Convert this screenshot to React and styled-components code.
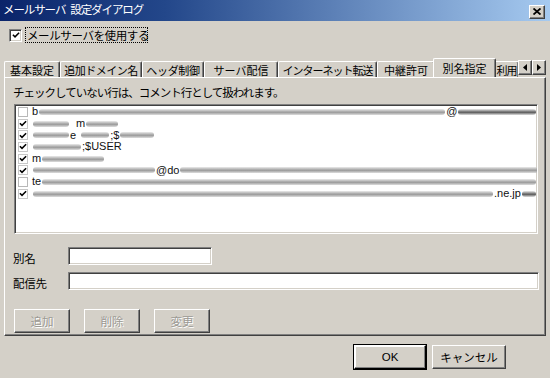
import React from "react";
import styled, { createGlobalStyle, css } from "styled-components";

const Global = createGlobalStyle`
  html, body { margin: 0; padding: 0; background: #d4d0c8; }
  body { font-family: "Liberation Sans", "Noto Sans CJK JP", sans-serif; }
  * { box-sizing: border-box; }
`;

const FONT = `"Liberation Sans", "Noto Sans CJK JP", sans-serif`;

const sunken = css`
  border-top: 1px solid #808080;
  border-left: 1px solid #808080;
  border-bottom: 1px solid #ffffff;
  border-right: 1px solid #ffffff;
  box-shadow: inset 1px 1px 0 #404040, inset -1px -1px 0 #d4d0c8;
`;

const raised = css`
  border-top: 1px solid #ffffff;
  border-left: 1px solid #ffffff;
  border-bottom: 1px solid #404040;
  border-right: 1px solid #404040;
  box-shadow: inset -1px -1px 0 #808080;
`;

const Window = styled.div`
  width: 550px;
  height: 378px;
  background: #d4d0c8;
  font-family: ${FONT};
  font-size: 11px;
  color: #000;
  display: flex;
  flex-direction: column;
  overflow: hidden;
`;

const TitleBar = styled.div`
  height: 21px;
  background: linear-gradient(to right, #0a246a 0%, #23478a 30%, #a6caf0 100%);
  display: flex;
  align-items: center;
  justify-content: space-between;
  padding: 0 5px 0 3px;
`;

const Title = styled.div`
  color: #fff;
  font-size: 11.5px;
  letter-spacing: -1.1px;
  line-height: 1;
  white-space: nowrap;
  display: flex;
  gap: 5px;
`;

const CloseButton = styled.div`
  width: 16px;
  height: 14px;
  background: #d4d0c8;
  ${raised};
  display: flex;
  align-items: center;
  justify-content: center;
  margin-top: 2px;
`;

const Body = styled.div`
  flex: 1;
  display: flex;
  flex-direction: column;
  padding: 0 4px;
`;

const UseRow = styled.div`
  display: flex;
  align-items: center;
  height: 16px;
  margin-top: 6px;
  padding-left: 5px;
`;

const BigCheck = styled.div`
  width: 13px;
  height: 13px;
  background: #fff;
  ${sunken};
  display: flex;
  align-items: center;
  justify-content: center;
`;

const FocusLabel = styled.div`
  margin-left: 3px;
  height: 16px;
  width: 123px;
  border: 1px dotted #000;
  display: flex;
  align-items: center;
  padding-left: 1px;
  font-size: 11.5px;
  letter-spacing: -0.4px;
  white-space: nowrap;
`;

const TabStrip = styled.div`
  margin-top: 15px;
  height: 19px;
  display: flex;
  align-items: flex-end;
`;

const TabTrack = styled.div`
  flex: 1;
  display: flex;
  align-items: flex-end;
  overflow: hidden;
  height: 19px;
`;

const Tab = styled.div`
  flex: none;
  width: ${(p) => p.$w}px;
  height: ${(p) => (p.$active ? 20 : 16)}px;
  margin: ${(p) => (p.$active ? "0 -2px -1px -2px" : "0")};
  position: relative;
  z-index: ${(p) => (p.$active ? 2 : 1)};
  background: #d4d0c8;
  border-top: 1px solid #fff;
  border-left: 1px solid #fff;
  border-right: 1px solid #404040;
  box-shadow: inset -1px 0 0 #808080;
  border-radius: 2px 2px 0 0;
  display: flex;
  align-items: center;
  justify-content: center;
  font-size: 11px;
  letter-spacing: ${(p) => p.$ls}px;
  white-space: nowrap;
  padding-bottom: ${(p) => (p.$active ? 2 : 0)}px;
`;

const Arrows = styled.div`
  display: flex;
  align-self: flex-start;
  margin-top: 2px;
`;

const ArrowButton = styled.div`
  width: 14px;
  height: 15px;
  background: #d4d0c8;
  ${raised};
  display: flex;
  align-items: center;
  justify-content: center;
`;

const Panel = styled.div`
  height: 259px;
  width: 542px;
  border-top: 1px solid #fff;
  border-left: 1px solid #fff;
  border-right: 1px solid #404040;
  border-bottom: 1px solid #404040;
  box-shadow: inset -1px -1px 0 #808080;
  padding: 8px 0 0 8px;
  display: flex;
  flex-direction: column;
`;

const Hint = styled.div`
  font-size: 11.5px;
  letter-spacing: -1px;
  line-height: 14px;
  white-space: nowrap;
`;

const ListBox = styled.div`
  margin: 4px 0 0 1px;
  width: 524px;
  height: 130px;
  background: #fff;
  ${sunken};
  padding: 1px 0 0 3px;
  overflow: hidden;
`;

const Row = styled.div`
  height: 11.7px;
  display: flex;
  align-items: center;
  font-size: 11px;
  line-height: 1;
  white-space: nowrap;
`;

const SmallBox = styled.div`
  flex: none;
  width: 10px;
  height: 10px;
  border: 1px solid ${(p) => (p.$checked ? "#c8c8c8" : "#b8b8b8")};
  background: #fff;
  margin-right: 4px;
  display: flex;
  align-items: center;
  justify-content: center;
`;

const Frag = styled.span`
  flex: none;
  color: #111;
`;

const Smear = styled.span`
  flex: none;
  width: ${(p) => p.$w}px;
  height: 6px;
  margin: 0 1px;
  border-radius: 4px;
  background: linear-gradient(
    to bottom,
    rgba(215, 215, 215, 0.5),
    ${(p) => (p.$dark ? "#5a5a5a" : "#9a9a9a")} 55%,
    rgba(200, 200, 200, 0.6)
  );
  filter: blur(0.7px);
`;

const Gap = styled.span`
  flex: none;
  width: ${(p) => p.$w}px;
`;

const Form = styled.div`
  margin-top: 12px;
  display: grid;
  grid-template-columns: 55px auto;
  row-gap: 5px;
  align-items: center;
`;

const FieldLabel = styled.div`
  font-size: 11.5px;
  letter-spacing: -0.3px;
  padding-top: 4px;
`;

const TextBox = styled.div`
  width: ${(p) => p.$w}px;
  height: 18px;
  background: #fff;
  ${sunken};
`;

const ActionRow = styled.div`
  margin-top: 18px;
  display: flex;
  gap: 14px;
  padding-left: 1px;
`;

const PushButton = styled.div`
  width: ${(p) => p.$w || 56}px;
  height: 24px;
  background: #d4d0c8;
  ${raised};
  display: flex;
  align-items: center;
  justify-content: center;
  font-size: 11.5px;
  color: ${(p) => (p.$disabled ? "#9c9a94" : "#000")};
  text-shadow: ${(p) => (p.$disabled ? "1px 1px 0 #ffffff" : "none")};
  ${(p) =>
    p.$default &&
    css`
      outline: 1px solid #000;
      outline-offset: 0;
      border-bottom-color: #000;
      border-right-color: #000;
      box-shadow: inset -1px -1px 0 #808080, inset 1px 1px 0 #fff;
    `}
`;

const Footer = styled.div`
  display: flex;
  justify-content: flex-end;
  gap: 6px;
  padding: 9px 40px 0 0;
`;

const Check = ({ size = 9 }) => (
  <svg width={size} height={size} viewBox="0 0 9 9">
    <path d="M1 4.2 L3.4 6.6 L8 2" fill="none" stroke="#000" strokeWidth="1.7" />
  </svg>
);

const tabs = [
  { label: "基本設定", w: 56, ls: 0 },
  { label: "追加ドメイン名", w: 82, ls: -0.5 },
  { label: "ヘッダ制御", w: 62, ls: -0.3 },
  { label: "サーバ配信", w: 74, ls: 0 },
  { label: "インターネット転送", w: 99, ls: -1 },
  { label: "中継許可", w: 58, ls: 0 },
  { label: "別名指定", w: 63, ls: 0, active: true },
  { label: "利用", w: 25, ls: -1 },
];

const rows = [
  { checked: false, parts: [["t", "b"], ["s", 406], ["t", "@"], ["s", 78, true]] },
  { checked: true, parts: [["s", 36], ["g", 6], ["t", "m"], ["s", 32]] },
  { checked: true, parts: [["s", 36], ["t", "e"], ["g", 4], ["s", 28], ["t", ";$"], ["s", 34]] },
  { checked: true, parts: [["s", 48], ["t", ";$USER"]] },
  { checked: true, parts: [["t", "m"], ["s", 62]] },
  { checked: true, parts: [["s", 122], ["t", "@do"], ["s", 362]] },
  { checked: false, parts: [["t", "te"], ["s", 494]] },
  { checked: true, parts: [["s", 460], ["t", ".ne.jp"], ["s", 14, true]] },
];

export default function App() {
  return (
    <Window>
      <Global />
      <TitleBar>
        <Title>
          <span>メールサーバ</span>
          <span>設定ダイアログ</span>
        </Title>
        <CloseButton>
          <svg width="8" height="7" viewBox="0 0 8 7">
            <path d="M0.5 0.5 L7.5 6.5 M7.5 0.5 L0.5 6.5" stroke="#000" strokeWidth="1.8" />
          </svg>
        </CloseButton>
      </TitleBar>
      <Body>
        <UseRow>
          <BigCheck>
            <Check size={8} />
          </BigCheck>
          <FocusLabel>メールサーバを使用する</FocusLabel>
        </UseRow>
        <TabStrip>
          <TabTrack>
            {tabs.map((t) => (
              <Tab key={t.label} $w={t.w} $ls={t.ls} $active={t.active}>
                {t.label}
              </Tab>
            ))}
          </TabTrack>
          <Arrows>
            <ArrowButton>
              <svg width="4" height="7" viewBox="0 0 4 7">
                <path d="M4 0 L0 3.5 L4 7 Z" fill="#000" />
              </svg>
            </ArrowButton>
            <ArrowButton>
              <svg width="4" height="7" viewBox="0 0 4 7">
                <path d="M0 0 L4 3.5 L0 7 Z" fill="#000" />
              </svg>
            </ArrowButton>
          </Arrows>
        </TabStrip>
        <Panel>
          <Hint>チェックしていない行は、コメント行として扱われます。</Hint>
          <ListBox>
            {rows.map((r, i) => (
              <Row key={i}>
                <SmallBox $checked={r.checked}>{r.checked && <Check />}</SmallBox>
                {r.parts.map(([k, v, d], j) =>
                  k === "t" ? (
                    <Frag key={j}>{v}</Frag>
                  ) : k === "g" ? (
                    <Gap key={j} $w={v} />
                  ) : (
                    <Smear key={j} $w={v} $dark={d} />
                  )
                )}
              </Row>
            ))}
          </ListBox>
          <Form>
            <FieldLabel>別名</FieldLabel>
            <TextBox $w={144} />
            <FieldLabel>配信先</FieldLabel>
            <TextBox $w={471} />
          </Form>
          <ActionRow>
            <PushButton $disabled>追加</PushButton>
            <PushButton $disabled>削除</PushButton>
            <PushButton $disabled>変更</PushButton>
          </ActionRow>
        </Panel>
        <Footer>
          <PushButton $default $w={72}>OK</PushButton>
          <PushButton $w={74}>キャンセル</PushButton>
        </Footer>
      </Body>
    </Window>
  );
}
